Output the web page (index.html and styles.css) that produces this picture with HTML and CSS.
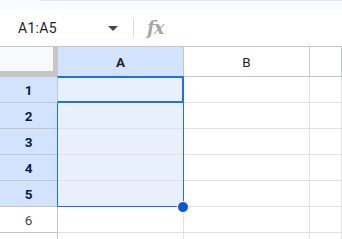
FILE: index.html
```html
<!DOCTYPE html>
<html>
<head>
<meta charset="utf-8">
<link rel="stylesheet" href="styles.css">
</head>
<body>
<div class="app">
  <div class="topstrip"></div>
  <div class="fbar">
    <div class="namebox">
      <span class="ref">A1:A5</span>
      <span class="caret"></span>
    </div>
    <div class="sep"></div>
    <span class="fx">fx</span>
  </div>
  <div class="sheet">
    <div class="corner"></div>
    <div class="ch selh">A</div>
    <div class="ch">B</div>
    <div class="ch"></div>

    <div class="rh selh">1</div><div class="cell selc"></div><div class="cell"></div><div class="cell"></div>
    <div class="rh selh">2</div><div class="cell selc"></div><div class="cell"></div><div class="cell"></div>
    <div class="rh selh">3</div><div class="cell selc"></div><div class="cell"></div><div class="cell"></div>
    <div class="rh selh">4</div><div class="cell selc"></div><div class="cell"></div><div class="cell"></div>
    <div class="rh selh">5</div><div class="cell selc"></div><div class="cell"></div><div class="cell"></div>
    <div class="rh">6</div><div class="cell"></div><div class="cell"></div><div class="cell"></div>
    <div class="rh last"></div><div class="cell last"></div><div class="cell last"></div><div class="cell last"></div>

    <div class="selection"></div>
    <div class="active"></div>
    <div class="handle"></div>
  </div>
</div>
</body>
</html>
```

FILE: styles.css
```css
html, body {
  margin: 0;
  padding: 0;
  background: #ffffff;
}
body {
  width: 342px;
  height: 239px;
  overflow: hidden;
  font-family: Roboto, "Liberation Sans", Arial, sans-serif;
}
.app {
  display: flex;
  flex-direction: column;
  height: 239px;
}
.topstrip {
  height: 10px;
  flex: none;
  background-color: #f9fbfd;
  background-image: linear-gradient(to right, transparent 40px, #e3eaf6 40px);
  background-size: 100% 1px;
  background-repeat: no-repeat;
}
.fbar {
  height: 37px;
  flex: none;
  box-sizing: border-box;
  border-bottom: 1px solid #c4c7c5;
  display: flex;
  align-items: center;
  background: #ffffff;
}
.namebox {
  width: 133px;
  display: flex;
  align-items: center;
  box-sizing: border-box;
  padding-left: 18px;
}
.ref {
  font-size: 14px;
  color: #1f1f1f;
  letter-spacing: 0.3px;
}
.caret {
  width: 0;
  height: 0;
  border-left: 5px solid transparent;
  border-right: 5px solid transparent;
  border-top: 5px solid #444746;
  margin-left: 51px;
  margin-top: 1px;
}
.sep {
  width: 1px;
  height: 20px;
  background: #dadce0;
}
.fx {
  font-family: "DejaVu Serif", "Liberation Serif", serif;
  font-style: italic;
  font-weight: bold;
  font-size: 18px;
  color: #a6a6a6;
  margin-left: 13px;
  letter-spacing: -1px;
  margin-top: -2px;
}
.sheet {
  position: relative;
  flex: 1;
  display: grid;
  grid-template-columns: 58px 126px 126px 1fr;
  grid-template-rows: 30px repeat(6, 26px) 1fr;
}
.sheet > div {
  box-sizing: border-box;
}
.corner {
  background: #f8f9fa;
  border-right: 5px solid #c4c7c5;
  border-bottom: 6px solid #c4c7c5;
}
.ch {
  background: #ffffff;
  border-right: 1px solid #c4c7c5;
  border-bottom: 1px solid #c4c7c5;
  display: flex;
  align-items: center;
  justify-content: center;
  font-size: 13.5px;
  color: #1f1f1f;
  padding-top: 1px;
}
.rh {
  background: #ffffff;
  border-right: 1px solid #c4c7c5;
  border-bottom: 1px solid #c4c7c5;
  display: flex;
  align-items: center;
  justify-content: center;
  font-size: 13.5px;
  color: #444746;
}
.rh.last {
  border-bottom: none;
}
.selh {
  background: #d3e3fd;
  font-weight: bold;
  color: #041e49;
}
.ch.selh {
  color: #1f1f1f;
}
.cell {
  background: #ffffff;
  border-right: 1px solid #e1e1e1;
  border-bottom: 1px solid #e1e1e1;
}
.cell.last {
  border-bottom: none;
}
.selc {
  background: #e8f0fe;
}
.selection {
  position: absolute;
  left: 57px;
  top: 29px;
  width: 127px;
  height: 131px;
  border: 1px solid #1a73e8;
  box-sizing: border-box;
}
.active {
  position: absolute;
  left: 57px;
  top: 29px;
  width: 127px;
  height: 27px;
  border: 2px solid #1a73e8;
  border-left-color: #c4c7c5;
  border-left-width: 1px;
  box-sizing: border-box;
}
.handle {
  position: absolute;
  left: 177px;
  top: 154px;
  width: 12px;
  height: 12px;
  border-radius: 50%;
  background: #0b57d0;
  border: 1px solid #ffffff;
  box-sizing: border-box;
}
```
